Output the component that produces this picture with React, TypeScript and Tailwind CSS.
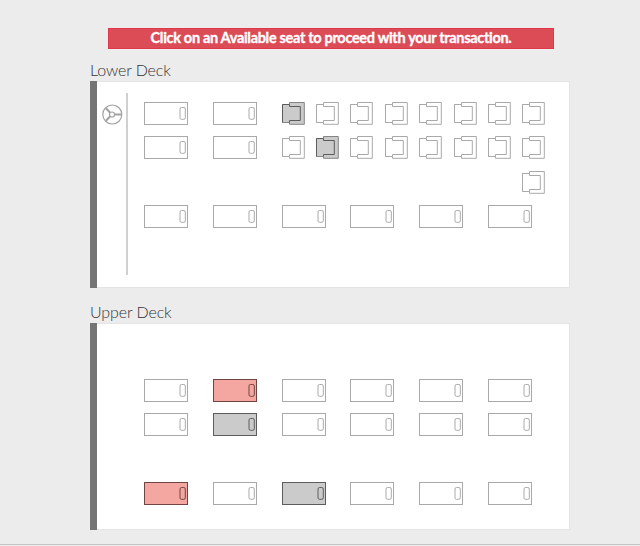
import clsx from "clsx";

type Status = "available" | "booked" | "ladies";
type Place = { col: number; row: number; kind: "seat" | "sleeper"; status?: Status };

const sleeperCols = [1, 3, 5, 7, 9, 11];
const seatCols = [5, 6, 7, 8, 9, 10, 11, 12];

const lowerDeck: Place[] = [
  { col: 1, row: 1, kind: "sleeper" },
  { col: 3, row: 1, kind: "sleeper" },
  ...seatCols.map((col): Place => ({ col, row: 1, kind: "seat", status: col === 5 ? "booked" : "available" })),
  { col: 1, row: 2, kind: "sleeper" },
  { col: 3, row: 2, kind: "sleeper" },
  ...seatCols.map((col): Place => ({ col, row: 2, kind: "seat", status: col === 6 ? "booked" : "available" })),
  { col: 12, row: 3, kind: "seat" },
  ...sleeperCols.map((col): Place => ({ col, row: 4, kind: "sleeper" })),
];

const upperDeck: Place[] = [
  ...sleeperCols.map((col): Place => ({ col, row: 1, kind: "sleeper", status: col === 3 ? "ladies" : "available" })),
  ...sleeperCols.map((col): Place => ({ col, row: 2, kind: "sleeper", status: col === 3 ? "booked" : "available" })),
  ...sleeperCols.map((col): Place => ({
    col,
    row: 4,
    kind: "sleeper",
    status: col === 1 ? "ladies" : col === 5 ? "booked" : "available",
  })),
];

const colors: Record<Status, string> = {
  available: "fill-white stroke-[#a9a9ab]",
  booked: "fill-[#cbcbcb] stroke-[#5c5c5c]",
  ladies: "fill-[#f4a7a1] stroke-[#704541]",
};

function Sleeper({ status }: { status: Status }) {
  return (
    <svg width="45" height="23" className={clsx("block", colors[status])}>
      <rect x="0.5" y="0.5" width="43" height="22" />
      <rect x="36" y="5.5" width="5.3" height="11.8" rx="1.5" />
    </svg>
  );
}

function Seat({ status }: { status: Status }) {
  return (
    <svg width="23" height="23" className={clsx("block", colors[status])}>
      {/* cushion and frame */}
      <path
        d="M7.5 2.5H0.5V20.5H7.5V22.3H22.3V0.5H7.5Z"
        className={clsx(status === "booked" && "stroke-[#858585]")}
      />
      {/* armrests and backrest */}
      <path d="M7.5 2.5V4.5H18.3V18.5H7.5V20.5M0.5 20.5V2.5H7.5" fill="none" />
    </svg>
  );
}

function SteeringWheel() {
  return (
    <svg width="21" height="21" viewBox="0 0 21 21" fill="none" stroke="#a2a2a4">
      <circle cx="10.3" cy="10.5" r="9.5" strokeWidth="1.2" />
      <circle cx="10" cy="10.5" r="2.5" strokeWidth="1.2" />
      <path d="M8.2 8.7L4 4.2M8.2 12.3L4 16.8M12.5 10.5H19.6" strokeWidth="2" />
    </svg>
  );
}

function Deck({ title, places, driver }: { title: string; places: Place[]; driver?: boolean }) {
  return (
    <section>
      <h2 className="h-[21px] text-[16px] leading-[19px] font-light tracking-[-0.1px] text-[#333]">{title}</h2>
      <div className="flex h-[207px]">
        <div className="w-[7px] shrink-0 bg-[#757575]" />
        <div className={clsx("flex grow border-y border-r border-[#e4e4e4] bg-white", driver ? "pt-[11px]" : "pt-[55px]")}>
          <div className={clsx("flex w-[31px] shrink-0 pl-[5px]", driver && "h-[182px] border-r-2 border-[#d0d0d1] pt-[11px]")}>
            {driver && <SteeringWheel />}
          </div>
          <div
            className={clsx(
              "ml-4 grid h-fit w-[413px] shrink-0 grid-cols-[repeat(12,34.4px)] grid-rows-[repeat(4,34.4px)]",
              driver && "mt-[9px]"
            )}
          >
            {places.map(({ col, row, kind, status = "available" }) => (
              <button
                key={`${col}-${row}`}
                className="block h-fit w-fit"
                aria-label={`${title} ${kind} ${row}-${col}`}
                style={{ gridColumnStart: col, gridRowStart: row }}
              >
                {kind === "seat" ? <Seat status={status} /> : <Sleeper status={status} />}
              </button>
            ))}
          </div>
        </div>
      </div>
    </section>
  );
}

export default function App() {
  return (
    <div className="h-[546px] w-[640px] overflow-hidden bg-[#ececec] font-['Lato',sans-serif]">
      <div className="h-[545px] border-b border-[#c4c4c4] pt-7">
        <div className="ml-[108px] flex h-[21px] w-[446px] items-center justify-center border border-[#e0384a] bg-[#dc4c57] pb-px text-[14.5px] font-bold tracking-[-0.31px] whitespace-nowrap text-white [-webkit-text-stroke:0.35px_white]">
          Click on an Available seat to proceed with your transaction.
        </div>
        <main className="mt-[11px] ml-[90px] flex w-[480px] flex-col gap-3.5">
          <Deck title="Lower Deck" places={lowerDeck} driver />
          <Deck title="Upper Deck" places={upperDeck} />
        </main>
      </div>
    </div>
  );
}
